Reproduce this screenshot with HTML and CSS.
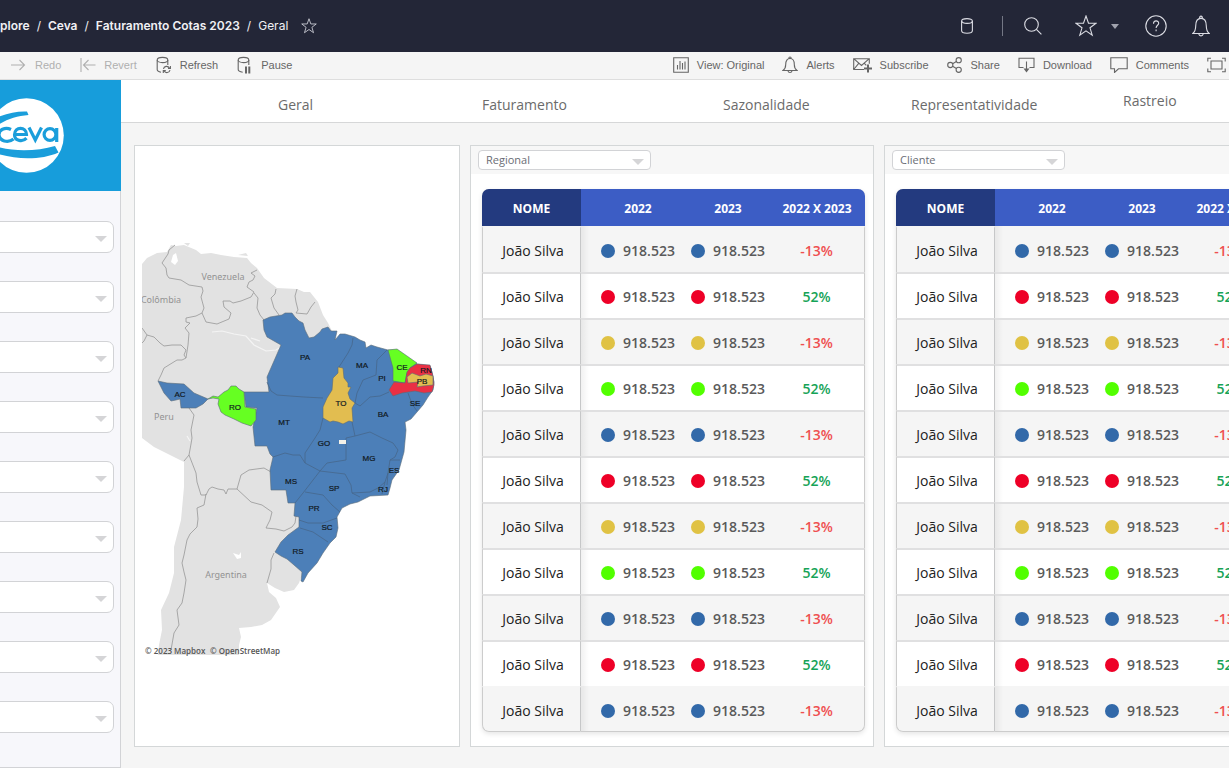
FILE: index.html
```html
<!DOCTYPE html>
<html lang="pt-BR">
<head>
<meta charset="utf-8">
<title>Faturamento Cotas 2023</title>
<link rel="stylesheet" href="styles.css">
</head>
<body>
<header class="topbar">
  <nav class="crumbs" aria-label="Breadcrumb">
    <a href="#">Explore</a><span>/</span><a href="#">Ceva</a><span>/</span><a href="#">Faturamento Cotas 2023</a><span>/</span><b>Geral</b>
    <button class="icon-btn fav" aria-label="Favorite"><svg width="16" height="16" viewBox="0 0 22 22"><path d="M11 1l2.500 7.200H21l-6 4.600 2.200 7.400L11 15.800l-6.200 4.400L7 12.800 1 8.200h7.500z"/></svg></button>
  </nav>
  <div class="top-actions">
    <button class="icon-btn" aria-label="Data"><svg width="12" height="16" viewBox="0 0 12 16"><ellipse cx="6" cy="3" rx="5.400" ry="2.400"/><path d="M.6 3v9.500c0 3.700 10.800 3.700 10.800 0V3"/></svg></button>
    <i class="divider"></i>
    <button class="icon-btn search" aria-label="Search"><svg width="18" height="18" viewBox="0 0 18 18"><circle cx="7.500" cy="7.500" r="6.800"/><path d="M12.400 12.400l5 5"/></svg></button>
    <button class="icon-btn star" aria-label="Favorites"><svg width="22" height="22" viewBox="0 0 22 22"><path d="M11 1l2.500 7.200H21l-6 4.600 2.200 7.400L11 15.800l-6.200 4.400L7 12.800 1 8.200h7.500z"/></svg><svg class="solid" width="8" height="5" viewBox="0 0 8 5"><path d="M0 0h8L4 5z"/></svg></button>
    <button class="icon-btn help" aria-label="Help"><svg width="22" height="22" viewBox="0 0 22 22"><circle cx="11" cy="11" r="10.200"/><path d="M8.500 8.800c0-4 5.200-3.600 5.200-.6 0 2-2.600 2.200-2.600 4.800M11.100 14.600v1.600"/></svg></button>
    <button class="icon-btn bell" aria-label="Notifications"><svg width="18" height="22" viewBox="0 0 18 22"><path d="M.8 18.500c2.400-2 2.900-3.500 2.900-7.500 0-4.500 1.800-7.600 5.300-7.600s5.300 3.100 5.300 7.600c0 4 .5 5.500 2.900 7.500zM7.600 3.400c0-3 2.800-3 2.800 0M6.800 18.800c.4 2.700 4 2.700 4.400 0"/></svg></button>
  </div>
</header>

<div class="toolbar">
  <div class="tools">
    <button disabled><svg width="16" height="16" viewBox="0 0 16 16"><path d="M0 8h13.500M8.500 3l5 5-5 5"/></svg>Redo</button>
    <button disabled><svg width="16" height="16" viewBox="0 0 16 16"><path d="M1 1v14M15.500 8H3.500M8.500 3l-5 5 5 5"/></svg>Revert</button>
    <button><svg width="16" height="18" viewBox="0 0 16 18"><ellipse cx="6.500" cy="4" rx="5.300" ry="2.600"/><path d="M1.200 4v9.500c0 1.500 1.500 2.300 3.800 2.700M11.800 4v5M7.500 13c.3-3 4.500-3.700 6-.8M14.400 10v2.500H12M14 14c-.5 3-4.600 3.600-6 .8M7.300 17v-2.400h2.500"/></svg>Refresh</button>
    <button><svg width="16" height="18" viewBox="0 0 16 18"><ellipse cx="6.500" cy="4" rx="5.300" ry="2.600"/><path d="M1.200 4v9.500c0 1.500 1.500 2.300 4.500 2.700M11.800 4v5"/><path class="bars" d="M9 10.500v7M12.300 10.500v7"/></svg>Pause</button>
  </div>
  <div class="tools">
    <button><svg width="16" height="16" viewBox="0 0 16 16"><path d="M.7.700h14.600v14.600H.7zM4.500 8v4.500M7 4v8.500M9.500 6v6.500M12 4.500v8"/></svg>View: Original</button>
    <button><svg width="16" height="18" viewBox="0 0 16 18"><path d="M1 14.500c2.200-1.600 2.700-3 2.700-6 0-3.600 1.500-6 4.300-6s4.300 2.400 4.300 6c0 3 .5 4.400 2.700 6zM6.800 2.500c0-2 2.400-2 2.400 0M6 14.800c.4 2.200 3.600 2.200 4 0"/></svg>Alerts</button>
    <button><svg width="19" height="16" viewBox="0 0 19 16"><path d="M11 12.500H.7V1.700h15.600v5M.7 1.700l7.800 6.800 7.800-6.800M.7 12.500l5-6.200M11.300 6.300l2 2"/><path class="bars" d="M15 7.500v8M11 11.500h8"/></svg>Subscribe</button>
    <button><svg width="16" height="16" viewBox="0 0 16 16"><circle cx="3.300" cy="8" r="2.600"/><circle cx="11.700" cy="3.200" r="2.600"/><circle cx="11.700" cy="12.800" r="2.600"/><path d="M5.600 6.700l3.800-2.200M5.600 9.300l3.800 2.200"/></svg>Share</button>
    <button><svg width="17" height="16" viewBox="0 0 17 16"><path d="M5.500 10.500H1V1.200h15v9.300h-4.500M8.500 4.500V13"/><path class="fill" d="M5.500 11.500h6l-3 4z"/></svg>Download</button>
    <button><svg width="18" height="16" viewBox="0 0 18 16"><path d="M.8.800h16.400v11H8.500L4.500 15.500v-3.700H.8z"/></svg>Comments</button>
    <button aria-label="Full screen"><svg width="19" height="16" viewBox="0 0 19 16"><path d="M4 4h11v8H4zM.8 4.500V1.200H4M15 1.200h3.200v3.300M.8 11.500v3.300H4M15 14.800h3.200v-3.300"/></svg></button>
  </div>
</div>

<div class="shell">
  <aside class="sidebar">
    <div class="brand">
      <svg class="logo" role="img" aria-label="Ceva" viewBox="0 0 121 111" preserveAspectRatio="xMinYMid slice">
        <circle cx="26.500" cy="55.500" r="37.300" fill="#fff"/>
        <g fill="none" stroke="#1a9edb" stroke-width="3.200">
          <path d="M11 49.500C5 46.500-1.500 50-1 55c.5 6 9 8.500 14.500 4"/>
          <path d="M14.500 54.500h12c0-8-12-8.500-12 .3 0 6.500 8.500 7.200 12 3.400"/>
          <path d="M29 47.500l6.300 12.500 6.200-12.500"/>
          <circle cx="50" cy="54.500" r="5.900"/><path d="M56.700 48v14"/>
        </g>
        <path fill="#1a9edb" d="M-2 37C8 33 18 31 27 31.500l1.500 3.500C17 36 7 39-2 45zM-2 67c18 5 40 4 57-1l3.500 6.500C42 80 18 80-2 74z"/>
      </svg>
    </div>
    <div class="filters">
      <label class="pick"><select aria-label="Filtro 1"><option></option></select></label>
      <label class="pick"><select aria-label="Filtro 2"><option></option></select></label>
      <label class="pick"><select aria-label="Filtro 3"><option></option></select></label>
      <label class="pick"><select aria-label="Filtro 4"><option></option></select></label>
      <label class="pick"><select aria-label="Filtro 5"><option></option></select></label>
      <label class="pick"><select aria-label="Filtro 6"><option></option></select></label>
      <label class="pick"><select aria-label="Filtro 7"><option></option></select></label>
      <label class="pick"><select aria-label="Filtro 8"><option></option></select></label>
      <label class="pick"><select aria-label="Filtro 9"><option></option></select></label>
    </div>
  </aside>

  <main class="main">
    <nav class="tabs">
      <a href="#">Geral</a><a href="#">Faturamento</a><a href="#">Sazonalidade</a><a href="#">Representatividade</a><a href="#" class="raised">Rastreio</a>
    </nav>
    <div class="board">
      <section class="panel map-panel">
        <svg class="map" viewBox="142 240 306 418" role="img" aria-label="Mapa do Brasil por estado">
          <path fill="#e2e2e2" d="M142 264L147 258 157 253 167 252 171 245 176 246 184 245 196 250 201 254 211 253 221 255 234 257 247 258 251 263 257 268 264 278 277 288 297 289 304 292 310 292 318 302 323 315 328 323 334 335 330 400 310 500 303 570 301 577 299 583 294 590 284 592 275 588 267 583 269 592 276 598 280 607 271 620 262 625 251 627 239 628 241 637 239 645 239 655H158L159 645 162 630 161 610 169 593 174 573V547L181 520 184 487V462L174 457 154 447 142 438z"/>
          <path fill="#fff" d="M173 255l3-2 2 8-3 4-4-3zM233 553l6 2 2-3v6l-4 1z"/>
          <path fill="#e2e2e2" d="M238 255l8-2 2 3zM184 243l6 0-2 3z"/>
          <path fill="none" stroke="#f4f4f4" stroke-width="1.200" d="M212 332l10-1 12 3 12 2 8 9 12 6 10-1 5-3M251 338l9 3M187 436l3 5"/>
          <g class="border">
            <path d="M175 245L169 250 168 254 162 263 166 268 167 275 169 278 181 280 189 285 202 287 203 291 201 297 204 308 202 313 206 322 217 324 229 319 231 313 224 307 223 301 230 301 233 303 241 301 251 297 254 292 247 287 249 282 253 280 255 276 251 273 257 270"/>
            <path d="M254 293L258 298 257 308 260 315 264 320M276 289L275 294 271 298 274 308 279 315M297 289L295 296 296 302 298 310 296 313 307 314 311 307 315 302"/>
            <path d="M202 313L196 316 186 318V322L190 323 185 328 189 333 188 345 186 358 182 360 177 360 164 368 161 375 158 381"/>
            <path d="M142 328L147 335 154 337 160 343 164 346 172 345 181 345 186 350 184 355 186 358M147 335L144 341 142 343"/>
            <path d="M189 408L194 415 191 430 192 438 191 444 189 455 196 473 197 482 201 495H206L209 489 212 487 218 489 224 490 226 494 228 489H237L241 475 249 470 264 468 271 472M237 489L251 502 262 505 272 512 270 520 266 528 276 529 284 531 292 527 295 523 296 516M184 461L189 455"/>
            <path d="M206 494L204 505 197 508 198 519 197 527 190 534 187 540 184 555 182 563 184 572 186 580 184 593 182 603 177 610 179 625 174 633 171 650M274 553L271 560V569L267 583"/>
          </g>
          <g class="state">
            <path fill="#4c7fb8" d="M263 320L270 317 282 315 285 313 292 313 295 317 299 321 303 323 305 330 309 338 314 337 320 332 322 329 328 327 331 331 337 331 335 340 340 334 345 334 355 337 360 340 365 342 366 348 371 345 377 347 388 350 397 350 407 357 417 364 430 366 432 372 434 382 433 390 428 397 423 405 417 412 411 419 405 422 406 430 404 452 399 470 392 480 390 488 388 495 370 496 358 502 350 504 342 508 337 517 338 528 336 537 330 543 323 553 317 563 308 573 303 582 301 581 302 572 294 565 287 559 281 556 275 552 281 542 288 535 299 527V517L294 516 295 503H288L286 490H271L270 470 273 457 270 454 267 446H255L253 427 257 408 246 407 244 392H269L267 377 281 345 267 337 264 330z"/>
            <path fill="#4c7fb8" d="M158 381L167 383 184 384 194 393 208 399 203 404 196 408H181L180 399 176 400 171 401 164 393z"/>
            <path fill="#66ff22" d="M208 399L213 396 218 397 224 392 228 390 231 386H236L239 389 244 392 245 407 256 409V420L251 426 242 423 234 419 225 415 221 412 218 404 219 399 213 398z"/>
            <path fill="#e2bd50" d="M338 367L343 368 344 378 348 383V387L351 387 348 393 350 399 355 403 352 408 353 422 349 421 343 424 338 422 333 421 330 422 323 418V407L327 398 332 390 333 378 338 373z"/>
            <path fill="#66ff22" d="M388 350L397 349 407 356 417 363 410 368 407 373 405 383 393 381V368z"/>
            <path fill="#ea3044" d="M407 372L410 368 417 364 430 365 433 376 434 385 432 392 424 393 415 391 402 393 393 396 389 390 394 382 405 383z"/>
            <path fill="#e2bd50" d="M407 377L412 373 420 376 426 374 433 376V385L423 386 417 387 418 382 408 383z"/>
          </g>
          <g class="border inner">
            <path d="M267 382L271 391 277 395 290 396 304 397 323 398M353 338L352 345 348 353 339 367M387 350L377 360 376 375 363 380 357 393 355 403 360 406 370 397 380 396 389 392M323 418L320 430 315 438 305 453V463L320 471M273 457L285 453 293 455 300 455 305 463M352 422L355 436 346 438V460L327 463 320 471M355 436L370 432 382 438 393 443 398 450 395 457 390 460 388 473 385 482 378 488 370 492 352 493M320 471L345 474 351 485 352 493 360 497M320 471L303 493 295 503M305 492L323 495 332 505 340 512M299 520L308 523 323 523 337 518M300 528L313 532 328 542M408 393L412 404 417 411M388 473L387 485M390 460L400 460M385 482L382 494"/>
          </g>
          <path fill="#f3f1e8" d="M339 440h7v4h-7z"/>
          <g class="country"><text x="223" y="280">Venezuela</text><text x="161" y="303">Colômbia</text><text x="164" y="420">Peru</text><text x="226" y="578">Argentina</text></g>
          <g class="code">
            <text x="305" y="360">PA</text><text x="362" y="368">MA</text><text x="402" y="370">CE</text><text x="426" y="373">RN</text><text x="382" y="381">PI</text><text x="422" y="384">PB</text><text x="180" y="397">AC</text><text x="235" y="410">RO</text><text x="341" y="406">TO</text><text x="415" y="406">SE</text><text x="383" y="417">BA</text><text x="284" y="425">MT</text><text x="324" y="446">GO</text><text x="369" y="461">MG</text><text x="394" y="473">ES</text><text x="291" y="484">MS</text><text x="334" y="491">SP</text><text x="383" y="492">RJ</text><text x="314" y="511">PR</text><text x="327" y="530">SC</text><text x="298" y="554">RS</text>
          </g>
          <text class="credit" x="145" y="654">© 2023 Mapbox</text><text class="credit" x="210" y="654">© OpenStreetMap</text>
        </svg>
      </section>

      <section class="panel">
        <div class="panel-bar"><label class="pick small"><select aria-label="Regional"><option>Regional</option></select></label></div>
        <div class="table-box"><table>
          <thead><tr><th>NOME</th><th>2022</th><th>2023</th><th>2022 X 2023</th></tr></thead>
          <tbody></tbody>
        </table></div>
      </section>

      <section class="panel">
        <div class="panel-bar"><label class="pick small"><select aria-label="Cliente"><option>Cliente</option></select></label></div>
        <div class="table-box"><table>
          <thead><tr><th>NOME</th><th>2022</th><th>2023</th><th>2022 X 2023</th></tr></thead>
          <tbody></tbody>
        </table></div>
      </section>
    </div>
  </main>
</div>
<script src="script.js"></script>
</body>
</html>
```

FILE: styles.css
```css
* { box-sizing: border-box; }
body {
  margin: 0;
  min-height: 100vh;
  display: flex;
  flex-direction: column;
  overflow: hidden;
  background: #f5f5f5;
  font-family: "Open Sans", "Noto Sans", sans-serif;
}
button { border: 0; padding: 0; background: none; font: inherit; color: inherit; }
a { color: inherit; text-decoration: none; }
svg { display: block; flex: none; }

.topbar {
  display: flex;
  justify-content: space-between;
  align-items: center;
  height: 52px;
  padding-right: 19px;
  background: #232637;
  color: #f0f0f4;
}
.crumbs {
  display: flex;
  align-items: center;
  gap: 7px;
  margin-left: -14px;
  font: 600 12px/20px Inter, sans-serif;
  white-space: nowrap;
}
.crumbs span, .crumbs b { font-weight: 400; }
.fav { margin-left: 6px; }
.icon-btn { display: flex; align-items: center; }
.icon-btn svg { fill: none; stroke: #dcdde4; stroke-width: 1.1; }
.icon-btn .solid { fill: #a0a2ad; stroke: none; }
.top-actions { display: flex; align-items: center; }
.divider { width: 1px; height: 20px; margin: 0 21px 0 29px; background: #747785; }
.star { margin-left: 33px; gap: 14px; }
.help { margin-left: 26px; }
.bell { margin-left: 25px; }

.toolbar {
  display: flex;
  justify-content: space-between;
  height: 28px;
  padding: 0 3px 2px 11px;
  border-bottom: 1px solid #dedede;
  background: #f5f5f5;
  color: #666;
  font: 11px/16px "Liberation Sans", Arial, sans-serif;
}
.tools { display: flex; gap: 18px; }
.tools:first-child { gap: 19px; }
.tools button { display: flex; align-items: center; gap: 8px; white-space: nowrap; }
.tools svg { fill: none; stroke: #666; stroke-width: 1.1; }
.tools .bars { stroke-width: 2; }
.tools .fill { fill: #666; stroke: none; }
.tools button:disabled { color: #b0b0b0; }
.tools button:disabled svg { stroke: #b0b0b0; }

.shell { display: flex; flex: 1; }
.sidebar {
  display: flex;
  flex-direction: column;
  flex: none;
  width: 121px;
  overflow: hidden;
}
.brand { height: 111px; background: #179ddb; }
.logo { width: 100%; height: 100%; }
.filters {
  display: grid;
  flex: 1;
  align-content: start;
  gap: 28px;
  padding: 30px 6px 20px 0;
  border: solid #d2d3d6;
  border-width: 0 1px 1px 0;
  background: #f7f7fb;
}
.pick { position: relative; display: block; margin-left: -12px; }
.pick::after {
  content: "";
  position: absolute;
  right: 7px;
  top: 15px;
  border: solid transparent;
  border-width: 6px 6px 0;
  border-top-color: #d5d5d7;
  pointer-events: none;
}
.pick select {
  display: block;
  appearance: none;
  width: 100%;
  height: 32px;
  border: 1px solid #d2d3d6;
  border-radius: 7px;
  background: #fff;
}
.pick.small { width: 173px; margin: 0; }
.pick.small::after { top: 9px; }
.pick.small select {
  height: 20px;
  padding: 0 7px;
  border-radius: 4px;
  color: #6a6d75;
  font: 11px/18px "Open Sans", sans-serif;
}

.main { flex: 1; min-width: 0; overflow: hidden; }
.tabs {
  display: grid;
  grid-template-columns: 204fr 241fr 188fr 212fr 106fr;
  align-items: end;
  height: 43px;
  padding-left: 157px;
  border-bottom: 1px solid #d6d7d8;
  background: #fff;
  color: #6b6b6b;
  font: 14px/34px "Open Sans", sans-serif;
}
.tabs .raised { align-self: center; }
.board {
  display: grid;
  grid-template-columns: minmax(326px, 326fr) minmax(404px, 404fr) minmax(404px, 404fr);
  gap: 10px;
  padding: 22px 13px 21px;
}
.panel { border: 1px solid #d4d7d8; background: #fff; }
.map-panel { display: flex; align-items: center; padding: 5px 11px 0 7px; }
.map { width: 100%; }
.border path { fill: none; stroke: #979797; stroke-width: .8; }
.border.inner path { stroke: #46678c; }
.state path { stroke: #5b6c78; stroke-width: .6; }
.code { fill: #101820; font: 8px "Liberation Sans", sans-serif; text-anchor: middle; }
.code text { stroke: #101820; stroke-width: .2; }
.country { fill: #929292; font: 9px "Noto Sans", sans-serif; text-anchor: middle; }
.credit { fill: #555; font: 600 8px "Open Sans", sans-serif; }

.panel-bar { padding: 4px 7px; background: #f7f7f7; }
.table-box {
  margin: 15px 8px 14px 11px;
  overflow: hidden;
  border-radius: 7px;
  box-shadow: 0 2px 5px #0000001a, inset 0 0 0 1px #ccc;
}
table { width: 100%; table-layout: fixed; border-spacing: 0; }
th, td { padding: 0; text-align: center; white-space: nowrap; }
th { height: 37px; padding-top: 3px; background: #3c5dc5; color: #fff; font: 700 12px/16px "Open Sans", sans-serif; }
th:first-child { width: 99px; background: #233a7f; }
th:nth-child(2) { width: 102px; }
th:nth-child(3) { width: 90px; }
th:nth-child(2), td:nth-child(2) { padding-left: 12px; }
th:last-child, td:last-child { padding-right: 4px; }
td { height: 46px; padding-top: 2px; border-top: 2px solid #e0e0e1; color: #5a5a5a; font: 600 14px/20px "Open Sans", sans-serif; }
td:first-child { padding-left: 3px; border-left: 1px solid #ccc; border-right: 1px solid #c6c7c8; color: #222; font-weight: 400; }
td:nth-child(2) { background: linear-gradient(90deg, #0000000e, transparent 8px); }
td:last-child { border-right: 1px solid #ccc; }
tbody tr:nth-child(odd) { background: #f5f5f5; }
tbody tr:first-child td, tbody tr:last-child td { border-top-color: transparent; }
tbody tr:last-child td { border-bottom: 1px solid #ccc; }
tbody tr:last-child td:first-child { border-bottom-left-radius: 7px; }
tbody tr:last-child td:last-child { border-bottom-right-radius: 7px; }
.value { display: flex; align-items: center; justify-content: center; gap: 8px; }
.dot { width: 14px; height: 14px; border-radius: 50%; }
.blue { background: #3269a9; }
.red { background: #ee0027; }
.gold { background: #e0c244; }
.green { background: #52ff00; }
td.down { color: #ef4f50; }
td.up { color: #16a357; }
```

FILE: script.js
```js
const colors = ["blue", "red", "gold", "green", "blue", "red", "gold", "green", "blue", "red", "blue"];

const valueCell = (color) => `<td><span class="value"><i class="dot ${color}"></i>918.523</span></td>`;

const rows = colors.map((color, i) => {
  const change = i % 2 ? '<td class="up">52%</td>' : '<td class="down">-13%</td>';
  return `<tr><td>João Silva</td>${valueCell(color)}${valueCell(color)}${change}</tr>`;
}).join("");

document.querySelectorAll("tbody").forEach((body) => { body.innerHTML = rows; });
```
